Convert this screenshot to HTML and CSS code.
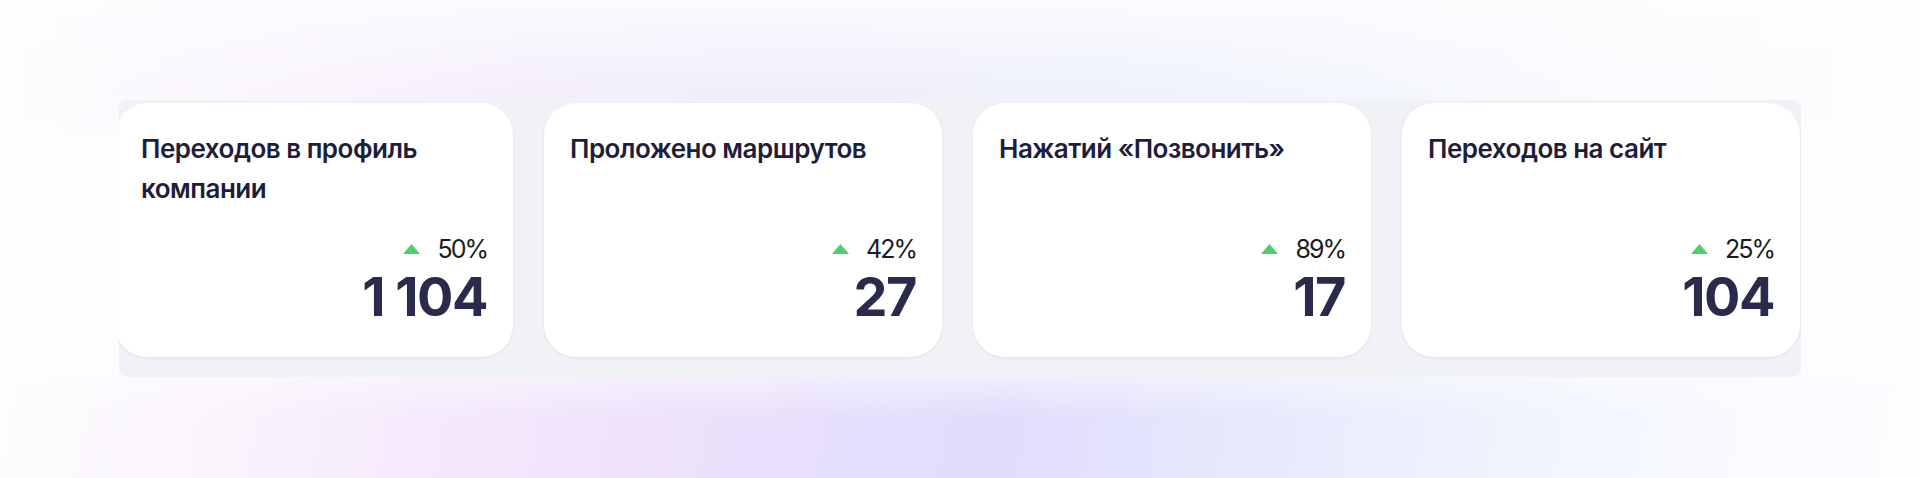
FILE: index.html
```html
<!DOCTYPE html>
<html lang="ru">
<head>
    <meta charset="UTF-8">
    <meta name="viewport" content="width=device-width, initial-scale=1.0">
    <title>Статистика</title>
    <link rel="stylesheet" href="styles.css">
</head>
<body>

<div class="page">
    <div class="carousel">
        <div class="track">
            <div class="card">
                <div class="card-title">Переходов в профиль компании</div>
                <div class="stats">
                    <div class="delta">
                        <svg class="arrow" width="17" height="10" viewBox="0 0 17 10"><polygon points="8.5,0 17,10 0,10"/></svg>
                        <span>50%</span>
                    </div>
                    <div class="value">1 104</div>
                </div>
            </div>
            <div class="card">
                <div class="card-title">Проложено маршрутов</div>
                <div class="stats">
                    <div class="delta">
                        <svg class="arrow" width="17" height="10" viewBox="0 0 17 10"><polygon points="8.5,0 17,10 0,10"/></svg>
                        <span>42%</span>
                    </div>
                    <div class="value">27</div>
                </div>
            </div>
            <div class="card">
                <div class="card-title">Нажатий «Позвонить»</div>
                <div class="stats">
                    <div class="delta">
                        <svg class="arrow" width="17" height="10" viewBox="0 0 17 10"><polygon points="8.5,0 17,10 0,10"/></svg>
                        <span>89%</span>
                    </div>
                    <div class="value">17</div>
                </div>
            </div>
            <div class="card">
                <div class="card-title">Переходов на сайт</div>
                <div class="stats">
                    <div class="delta">
                        <svg class="arrow" width="17" height="10" viewBox="0 0 17 10"><polygon points="8.5,0 17,10 0,10"/></svg>
                        <span>25%</span>
                    </div>
                    <div class="value">104</div>
                </div>
            </div>
        </div>
    </div>
</div>

</body>
</html>
```

FILE: styles.css
```css
body {
    font-family: 'Inter', 'Noto Sans', sans-serif;
    margin: 0;
    height: 478px;
    overflow: hidden;
    background-color: #fdfcff;
    background-repeat: no-repeat;
    background-image:
        linear-gradient(to bottom, rgba(253, 252, 255, 0.85) 0px, rgba(253, 252, 255, 0) 95px, rgba(253, 252, 255, 1) 150px),
        linear-gradient(to right, #fdfcfe 0%, #faf5fd 14%, #f4eefb 28%, #efeefb 42%, #eef1fc 56%, #f3f6fd 70%, #fafbfe 84%, #fdfdff 100%),
        linear-gradient(to bottom, rgba(253, 252, 255, 0.5), rgba(253, 252, 255, 0) 40px),
        linear-gradient(100deg, #fdfcfe 0%, #fbf6fd 10%, #f5eafc 22%, #eee2fb 34%, #e6dffc 44%, #e2dcfd 52%, #e5e6fc 62%, #ebeffd 72%, #f3f6fe 82%, #fafbff 92%, #fdfdff 100%);
    background-size: 100% 150px, 100% 150px, 100% 101px, 100% 101px;
    background-position: 0 0, 0 0, 0 377px, 0 377px;
}

.page {
    padding: 100px 0 0 119px;
}

.carousel {
    width: 1682px;
    height: 277px;
    box-sizing: border-box;
    padding-top: 3px;
    background-color: #f1f2f5;
    border-radius: 8px;
    overflow: hidden;
}

.track {
    display: flex;
    gap: 31px;
    margin-left: -4px;
}

.card {
    flex: 0 0 398px;
    height: 254px;
    box-sizing: border-box;
    padding: 26px 26px 33px 26px;
    background-color: #fff;
    border-radius: 32px;
    box-shadow: 0 1px 3px rgba(30, 30, 70, 0.08);
    display: flex;
    flex-direction: column;
}

.card-title {
    font-size: 26px;
    line-height: 40px;
    font-weight: 600;
    color: #1e1d3a;
    letter-spacing: -0.5px;
}

.stats {
    margin-top: auto;
    display: flex;
    flex-direction: column;
    align-items: flex-end;
}

.delta {
    display: flex;
    align-items: center;
    gap: 17px;
    height: 30px;
    margin-bottom: 6px;
    font-size: 25px;
    line-height: 30px;
    color: #1b1b1f;
    letter-spacing: -2px;
}

.arrow {
    fill: #4fcf6a;
}

.value {
    font-size: 54px;
    line-height: 54px;
    font-weight: 700;
    color: #2a2a4d;
    letter-spacing: -1.5px;
}
```
